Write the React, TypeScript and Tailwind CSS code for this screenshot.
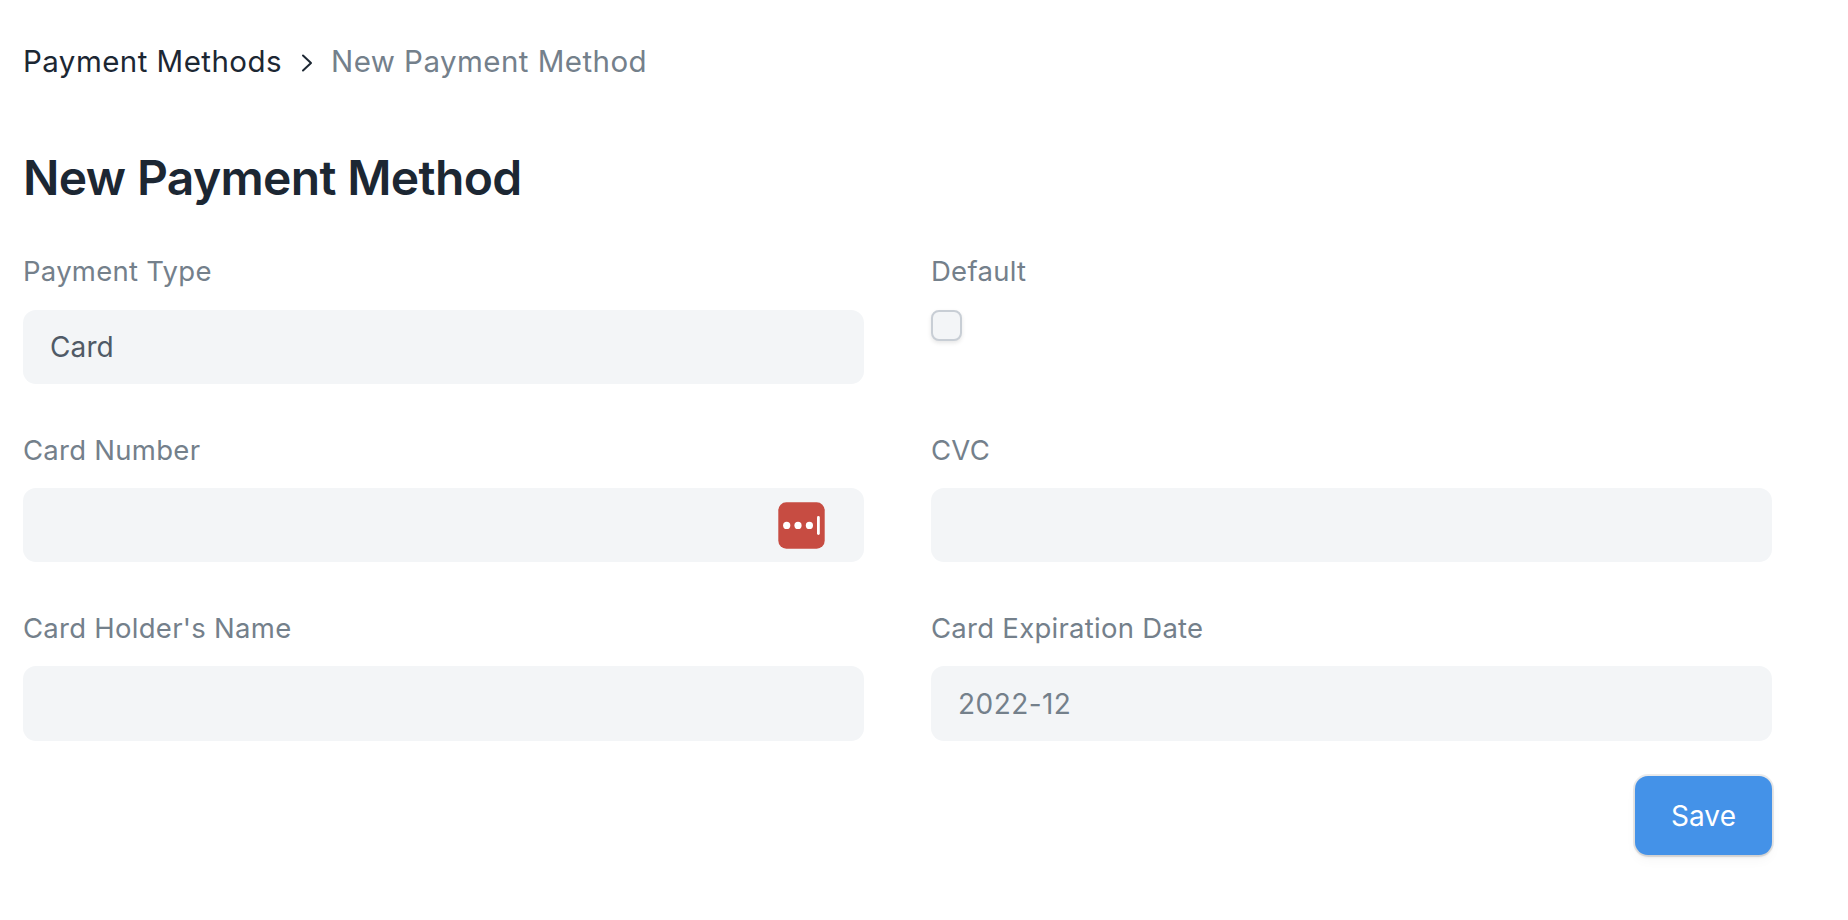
import React from "react";

function Field({ label, children, first = false }: { label: string; children: React.ReactNode; first?: boolean }) {
  return (
    <div className="flex flex-col">
      <label className={`flex items-center whitespace-nowrap text-[27.5px] tracking-[0.27px] text-[#74808b] ${first ? "mb-[21px] h-[34px]" : "mb-[19px] h-[36px]"}`}>{label}</label>
      {children}
    </div>
  );
}

const box = "flex w-full items-center rounded-[13px] bg-[#f3f5f7] text-[28px]";

export default function App() {
  return (
    <main className="h-[920px] w-[1848px] bg-white pl-[23px] pr-[76px] pt-[40px] font-['Inter',sans-serif]">
      <nav className="flex h-[42px] items-center whitespace-nowrap text-[29.5px] tracking-[0.45px]">
        <span className="pt-px text-[#1c2733]">Payment Methods</span>
        <svg className="ml-[19px] mr-[18px] mt-[4px]" width="12" height="18" viewBox="0 0 12 18" fill="none" stroke="#1c2733" strokeWidth="2" strokeLinecap="round" strokeLinejoin="round"><path d="M2 1.5l8 7.5-8 7.5" /></svg>
        <span className="pt-px text-[#74808b]">New Payment Method</span>
      </nav>
      <h1 className="mt-[66px] flex h-[60px] items-center whitespace-nowrap text-[48px] font-semibold tracking-[-0.65px] text-[#1c2733]">New Payment Method</h1>
      <form className="mt-[47px] grid grid-cols-[841px_841px] gap-x-[67px] gap-y-[49px]">
        <Field label="Payment Type" first><div className={`${box} h-[74px] px-[27px] pb-px tracking-[0.1px] text-[#505a66]`}>Card</div></Field>
        <Field label="Default" first><div className="size-[31px] rounded-[8px] border-2 border-[#c8ced5] bg-[#f3f5f7] shadow-[0_2px_4px_rgba(0,0,0,0.1)]" /></Field>
        <Field label="Card Number">
          <div className={`${box} h-[74px] justify-end pr-[39px]`}>
            <svg width="47" height="47" viewBox="0 0 47 47">
              <rect x="0.3" y="0.3" width="46.4" height="46.4" rx="8" fill="#c74c42" />
              <g fill="#fff">
                <circle cx="8.7" cy="23.4" r="3.6" />
                <circle cx="20" cy="23.4" r="3.6" />
                <circle cx="31.4" cy="23.4" r="3.6" />
                <rect x="39" y="14" width="2.8" height="19" rx="1.4" />
              </g>
            </svg>
          </div>
        </Field>
        <Field label="CVC"><div className={`${box} h-[74px]`} /></Field>
        <Field label="Card Holder's Name"><div className={`${box} h-[75px]`} /></Field>
        <Field label="Card Expiration Date"><div className={`${box} h-[75px] px-[27px] pt-px tracking-[0.45px] text-[#74808b]`}>2022-12</div></Field>
      </form>
      <div className="mt-[35px] flex justify-end">
        <button type="button" className="h-[79px] w-[137px] rounded-[13px] bg-[#4492e8] text-[28px] tracking-[0.1px] text-white shadow-[0_0_0_2px_rgba(0,0,0,0.08),0_2px_3px_rgba(0,0,0,0.1),0_6px_12px_rgba(0,0,0,0.03)]">Save</button>
      </div>
    </main>
  );
}
